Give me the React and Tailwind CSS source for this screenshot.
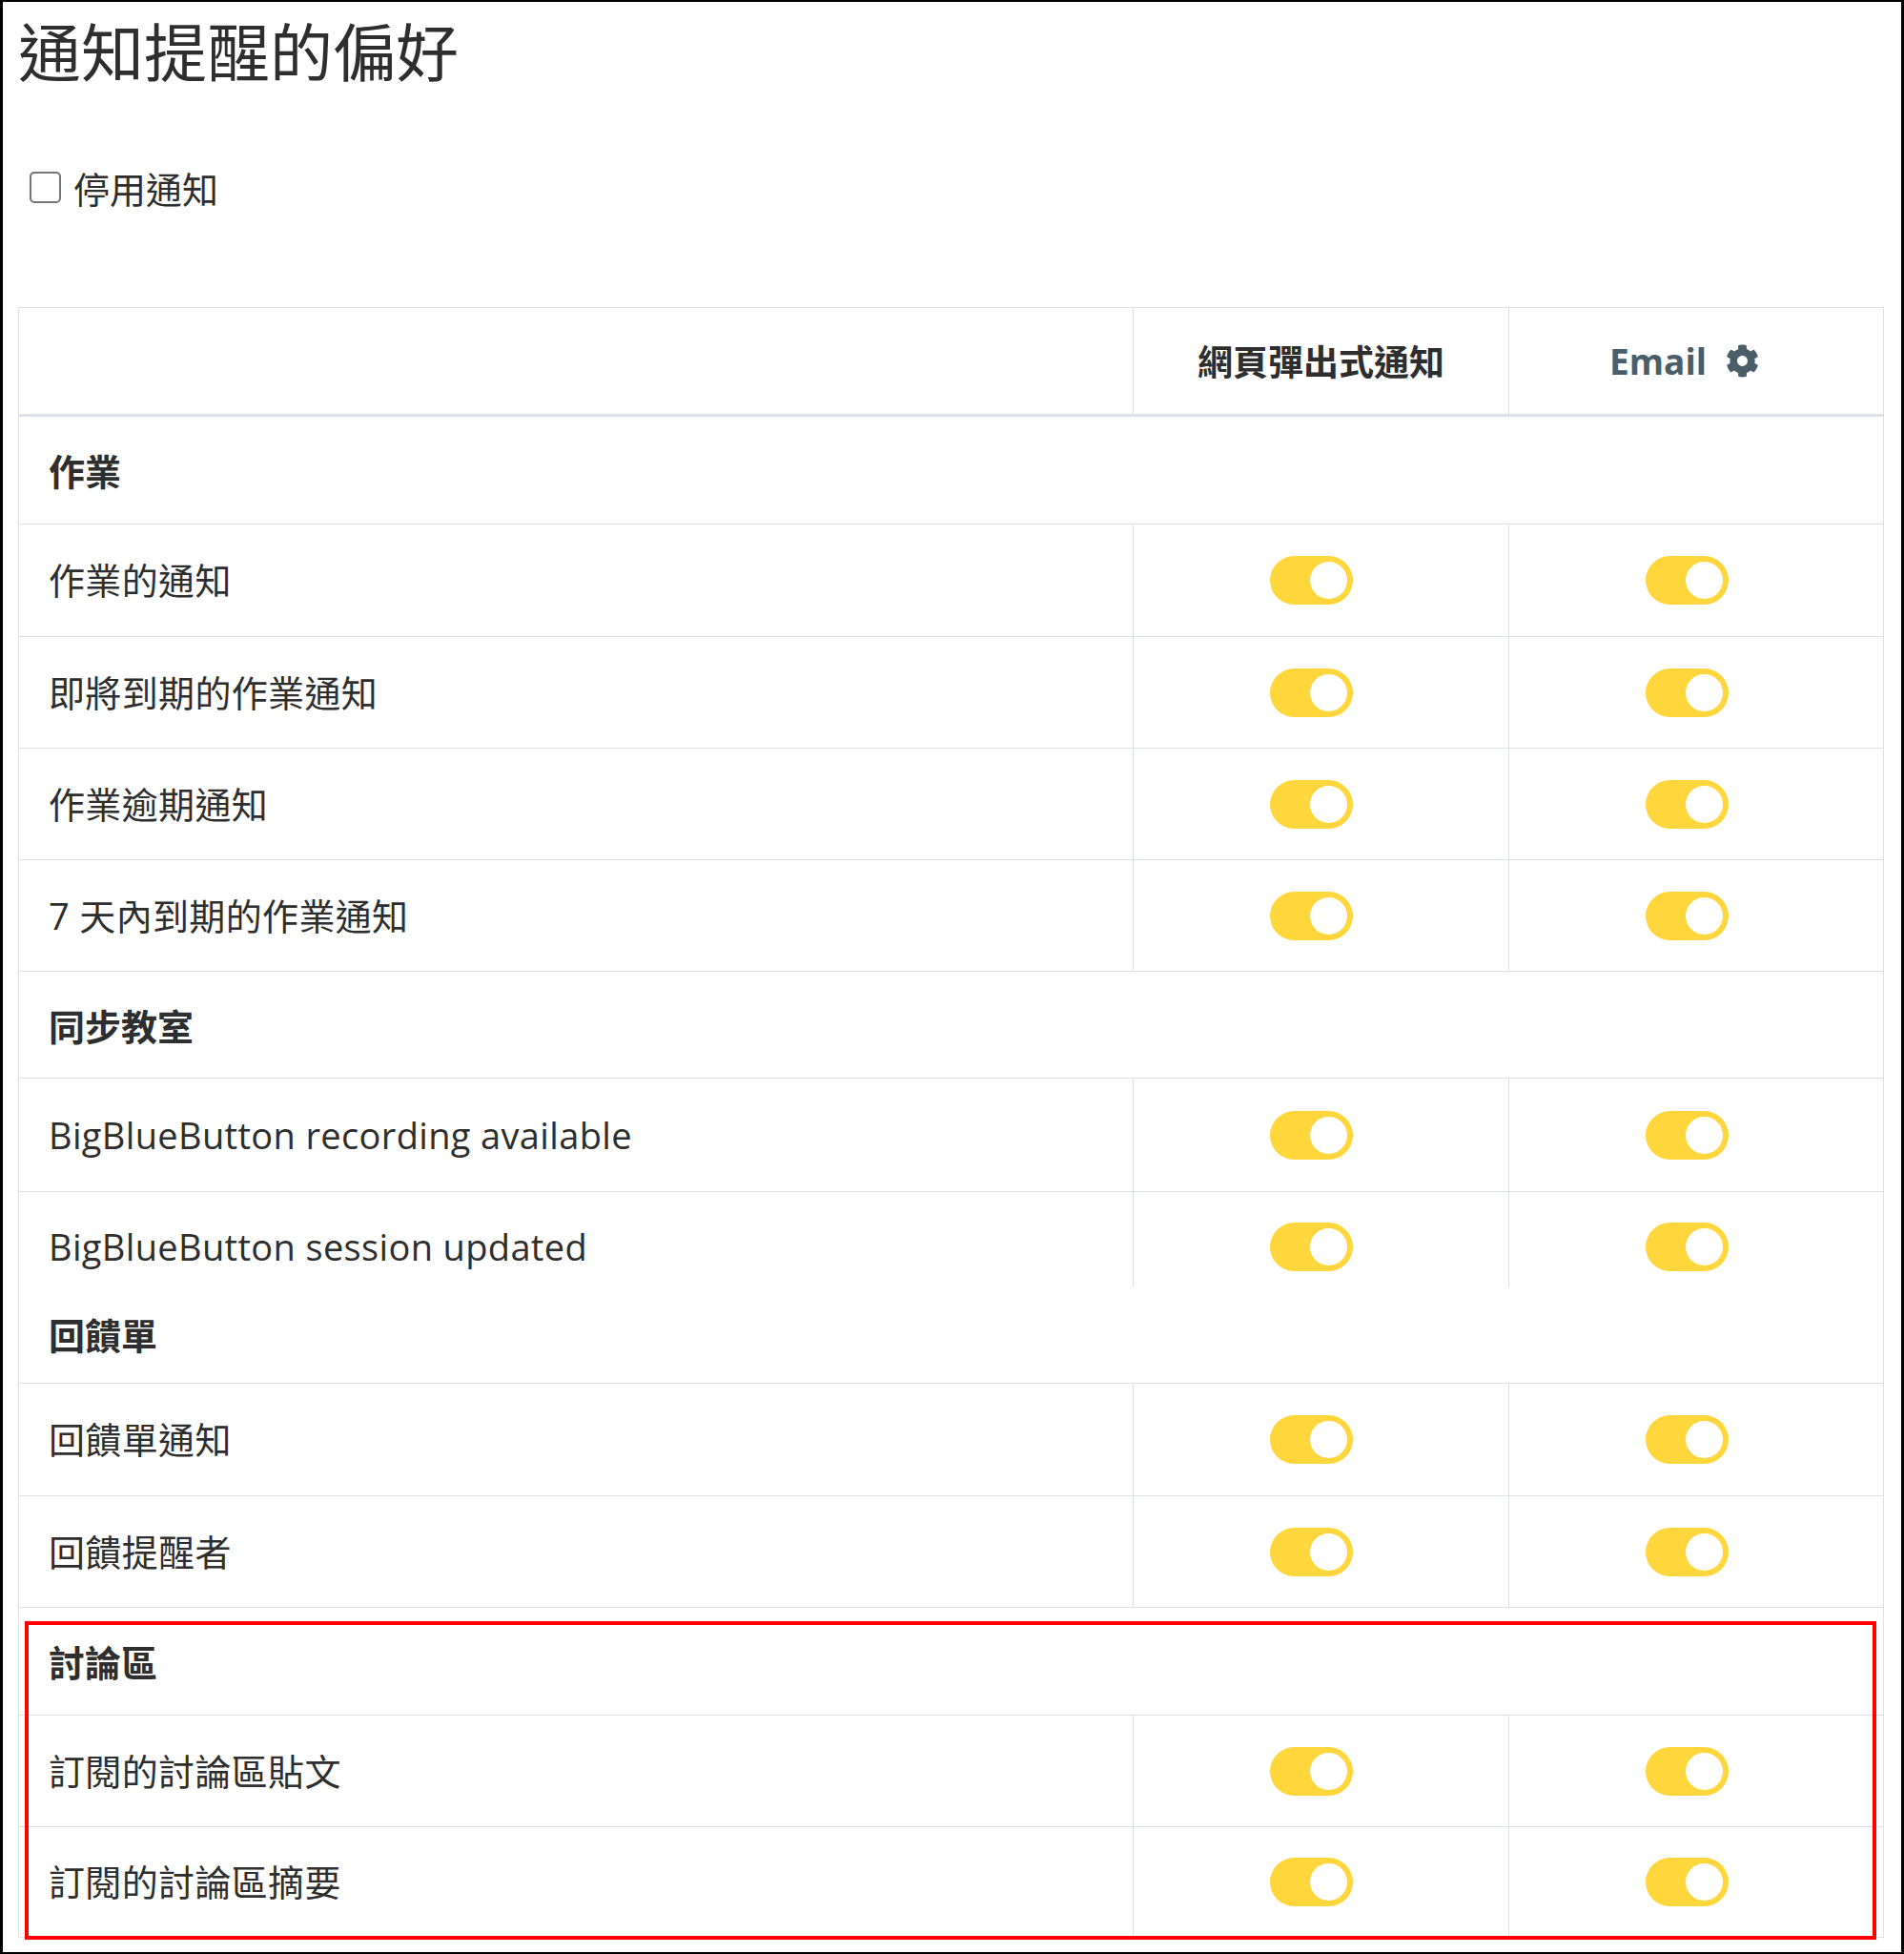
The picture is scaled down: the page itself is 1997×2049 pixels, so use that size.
import React from 'react';
import { FaCog } from 'react-icons/fa';

const sections = [
  {
    title: '作業',
    h: 'h-[113px] pt-[3px]',
    rows: [
      { label: '作業的通知', h: 'h-[118px]' },
      { label: '即將到期的作業通知', h: 'h-[117px]' },
      { label: '作業逾期通知', h: 'h-[117px]' },
      { label: '7 天內到期的作業通知', h: 'h-[117px]' },
    ],
  },
  {
    title: '同步教室',
    h: 'h-[112px] pt-[3px]',
    rows: [
      { label: 'BigBlueButton recording available', h: 'h-[119px]' },
      // screenshot was stitched here, so this row is cut short at the bottom
      { label: 'BigBlueButton session updated', h: 'h-[100px] pt-[14px]', cut: true },
    ],
  },
  {
    title: '回饋單',
    h: 'h-[101px]',
    rows: [
      { label: '回饋單通知', h: 'h-[118px]' },
      { label: '回饋提醒者', h: 'h-[117px]' },
    ],
  },
  {
    title: '討論區',
    h: 'h-[113px] pt-[3px]',
    rows: [
      { label: '訂閱的討論區貼文', h: 'h-[117px]' },
      { label: '訂閱的討論區摘要', h: 'h-[116px]' },
    ],
  },
];

// always-on switch, like the bootstrap form-switch
const Toggle = () => (
  <span className="flex w-[87px] h-[51px] justify-end rounded-full bg-[#ffd63b] p-[6px]">
    <span className="block w-[39px] h-[39px] rounded-full bg-white" />
  </span>
);

const ItemRow = ({ label, h, cut }) => (
  <div className={`grid grid-cols-[1168px_394px_1fr] ${h} ${cut ? '' : 'border-b border-[#dee2e6]'}`}>
    <div className="flex items-center pl-[31px] text-[38px] tracking-[0.35px]">{label}</div>
    <div className={`flex items-center justify-center border-l border-[#dee2e6] pr-[20px] ${cut ? '-mt-[14px] pt-[14px]' : ''}`}>
      <Toggle />
    </div>
    <div className={`flex items-center justify-center border-l border-[#dee2e6] pr-[20px] ${cut ? '-mt-[14px] pt-[14px]' : ''}`}>
      <Toggle />
    </div>
  </div>
);

const App = () => {
  return (
    <div className="relative w-[1997px] h-[2049px] overflow-hidden border-x-[3px] border-t-2 border-b-2 border-black bg-white text-[#2e2e2e] font-['Open_Sans','Noto_Sans_CJK_TC',sans-serif]">
      <div className="pl-[16px]">
        <h2 className="mt-[19px] text-[66px] leading-none font-normal">通知提醒的偏好</h2>

        <label className="mt-[89px] ml-[12px] flex h-[40px] items-center gap-[13px] text-[38px]">
          <input
            type="checkbox"
            className="w-[33px] h-[33px] appearance-none rounded-[5px] border-2 border-[#767676] bg-white"
          />
          <span className="translate-y-[2px]">停用通知</span>
        </label>

        <div className="mt-[106px] w-[1957px] border-x border-t border-[#dee2e6] text-[37px]">
          {/* header */}
          <div className="grid h-[114px] grid-cols-[1168px_394px_1fr] border-b-[3px] border-[#dee2e6] font-bold">
            <div />
            <div className="flex items-center justify-center border-l border-[#dee2e6] pt-[2px]">網頁彈出式通知</div>
            <div className="flex items-center justify-center gap-[20px] border-l border-[#dee2e6] pr-[25px] text-[#4a5d68]">
              <span>Email</span>
              <FaCog className="w-[35px] h-[35px]" />
            </div>
          </div>

          {sections.map((section) => (
            <React.Fragment key={section.title}>
              <div className={`flex items-center border-b border-[#dee2e6] pl-[31px] text-[38px] font-bold ${section.h}`}>
                {section.title}
              </div>
              {section.rows.map((row) => (
                <ItemRow key={row.label} {...row} />
              ))}
            </React.Fragment>
          ))}
        </div>
      </div>

      {/* highlight box drawn over the forum section */}
      <div className="pointer-events-none absolute left-[23px] top-[1698px] w-[1942px] h-[334px] border-4 border-[#ff0000]" />
    </div>
  );
};

export default App;
